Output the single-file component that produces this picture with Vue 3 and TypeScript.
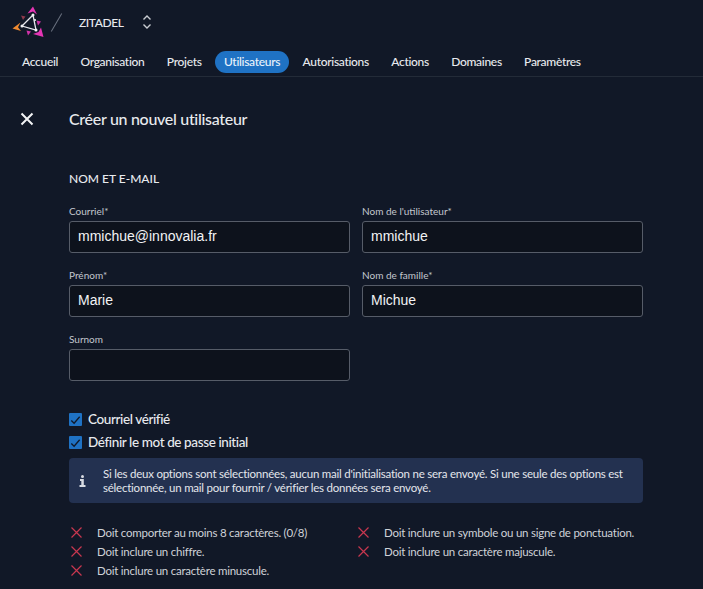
<template>
  <div class="page">
    <header class="topbar">
      <svg class="logo" width="34" height="36" viewBox="11 4 34 36" fill="none">
        <path d="M33 6.500 L37 14.500 L33 11.500 L27.500 13.500Z" fill="#e535b5" />
        <path d="M12.500 28.500 L20.500 22.500 L18 27.300 L21 31Z" fill="#f08a30" />
        <path d="M43.500 37 L33 34 L38.500 32 L41 27.500Z" fill="#e535b5" />
        <path d="M21 15.500 L25.500 16.500 L23 20Z" fill="#8f3a4c" />
        <path d="M36.500 20.500 L41 21.500 L38 25.500Z" fill="#d032a8" />
        <path d="M26.500 30.500 L31 31.500 L28 35.500Z" fill="#d032a8" />
        <path d="M33 15 L22 26 L36 30 Z" stroke="#e8e8ee" stroke-width="1.300" />
        <circle cx="33" cy="15" r="1.500" fill="#f2f2f5" />
        <circle cx="35" cy="20" r="1.100" fill="#f2f2f5" />
        <circle cx="22" cy="26" r="1.500" fill="#f2f2f5" />
        <circle cx="36" cy="30" r="1.500" fill="#f2f2f5" />
      </svg>
      <span class="slash"></span>
      <span class="org">ZITADEL</span>
      <svg class="updown" width="12" height="18" viewBox="0 0 12 18" fill="none" stroke="#c9ccd2" stroke-width="1.400">
        <path d="M2.500 6.500 L6 3 L9.500 6.500" />
        <path d="M2.500 11.500 L6 15 L9.500 11.500" />
      </svg>
    </header>

    <nav class="tabs">
      <a v-for="tab in tabs" :key="tab" class="tab" :class="{ active: tab === 'Utilisateurs' }">{{ tab }}</a>
    </nav>

    <main class="content">
      <div class="title-row">
        <svg class="close" width="14" height="14" viewBox="0 0 14 14" stroke="#f2f3f5" stroke-width="2" fill="none">
          <path d="M1.500 1.500 L12.500 12.500 M12.500 1.500 L1.500 12.500" />
        </svg>
        <h1>Créer un nouvel utilisateur</h1>
      </div>

      <section class="form">
        <h2>NOM ET E-MAIL</h2>
        <div class="fields">
          <label v-for="field in fields" :key="field.label" class="field">
            <span class="field-label">{{ field.label }}</span>
            <input type="text" :value="field.value" readonly />
          </label>
        </div>

        <div class="checks">
          <div v-for="check in checks" :key="check" class="check">
            <span class="box">
              <svg width="14" height="14" viewBox="0 0 14 14" fill="none" stroke="#10192a" stroke-width="1.400">
                <path d="M2.500 7.500 L5.500 10.500 L11.500 3.500" />
              </svg>
            </span>
            {{ check }}
          </div>
        </div>

        <div class="info">
          <svg class="info-icon" width="7" height="12" viewBox="0 0 7 12" fill="#d8dbe2">
            <circle cx="3.500" cy="1.600" r="1.500" />
            <path d="M1 4 H4.800 V10 H6.500 V12 H0.500 V10 H2.300 V6 H1Z" />
          </svg>
          <p>Si les deux options sont sélectionnées, aucun mail d'initialisation ne sera envoyé. Si une seule des options est sélectionnée, un mail pour fournir / vérifier les données sera envoyé.</p>
        </div>

        <ul class="rules">
          <li v-for="rule in rules" :key="rule" class="rule">
            <svg width="11" height="11" viewBox="0 0 11 11" stroke="#c8374f" stroke-width="1.200" fill="none">
              <path d="M0.500 0.500 L10.500 10.500 M10.500 0.500 L0.500 10.500" />
            </svg>
            <span>{{ rule }}</span>
          </li>
        </ul>
      </section>
    </main>
  </div>
</template>

<script setup lang="ts">
const tabs: string[] = [
  'Accueil',
  'Organisation',
  'Projets',
  'Utilisateurs',
  'Autorisations',
  'Actions',
  'Domaines',
  'Paramètres'
]

const fields: { label: string; value: string }[] = [
  { label: 'Courriel*', value: 'mmichue@innovalia.fr' },
  { label: "Nom de l'utilisateur*", value: 'mmichue' },
  { label: 'Prénom*', value: 'Marie' },
  { label: 'Nom de famille*', value: 'Michue' },
  { label: 'Surnom', value: '' }
]

const checks: string[] = ['Courriel vérifié', 'Définir le mot de passe initial']

const rules: string[] = [
  'Doit comporter au moins 8 caractères. (0/8)',
  'Doit inclure un symbole ou un signe de ponctuation.',
  'Doit inclure un chiffre.',
  'Doit inclure un caractère majuscule.',
  'Doit inclure un caractère minuscule.'
]
</script>

<style>
html,
body {
  margin: 0;
  background: #111827;
}
</style>

<style scoped>
.page {
  width: 703px;
  height: 589px;
  overflow: hidden;
  background: #111827;
  color: #e8eaee;
  font-family: Lato, "Liberation Sans", sans-serif;
}
.topbar {
  display: flex;
  align-items: center;
  height: 44px;
  padding-left: 11px;
}
.logo {
  flex: none;
}
.slash {
  width: 1px;
  height: 21px;
  margin-left: 11px;
  background: #6b7280;
  transform: rotate(30deg);
}
.org {
  margin-left: 22px;
  font-size: 12px;
  letter-spacing: -0.4px;
  font-weight: 500;
}
.updown {
  margin-left: 17px;
}
.tabs {
  display: flex;
  align-items: flex-start;
  gap: 4.300px;
  box-sizing: border-box;
  height: 33px;
  padding: 7px 0 0 13px;
  border-bottom: 1px solid #232b38;
}
.tab {
  padding: 3px 9px;
  border-radius: 11px;
  font-size: 12px;
  letter-spacing: -0.3px;
  line-height: 16px;
  font-weight: 500;
}
.tab.active {
  background: #1f72c4;
  color: #eaf2fb;
}
.content {
  padding: 32px 60px 0 20px;
}
.title-row {
  display: flex;
  align-items: center;
  gap: 35px;
}
.title-row h1 {
  margin: 0;
  font-size: 16px;
  letter-spacing: -0.3px;
  line-height: 20px;
  font-weight: 500;
}
.form {
  margin-left: 49px;
}
.form h2 {
  margin: 42px 0 0;
  font-size: 12px;
  line-height: 16px;
  font-weight: 500;
}
.fields {
  display: grid;
  grid-template-columns: 281px 281px;
  column-gap: 12px;
  row-gap: 15px;
  margin-top: 17px;
}
.field {
  display: flex;
  flex-direction: column;
  gap: 3px;
}
.field-label {
  font-size: 10px;
  line-height: 14px;
  color: #c3c7ce;
}
.field input {
  box-sizing: border-box;
  width: 100%;
  height: 32px;
  padding: 0 8px 2px;
  border: 1px solid #565c68;
  border-radius: 3px;
  background: #0d121c;
  color: #f2f3f5;
  font-family: "Liberation Sans", Arial, sans-serif;
  font-size: 14px;
  outline: none;
}
.checks {
  display: flex;
  flex-direction: column;
  gap: 10px;
  margin-top: 32px;
}
.check {
  display: flex;
  align-items: center;
  gap: 6px;
  font-size: 13.500px;
  letter-spacing: -0.39px;
  line-height: 13px;
  font-weight: 500;
}
.box {
  display: flex;
  align-items: center;
  justify-content: center;
  width: 13px;
  height: 13px;
  border-radius: 1px;
  background: #1f72c4;
}
.info {
  display: flex;
  align-items: center;
  box-sizing: border-box;
  width: 574px;
  height: 45px;
  margin-top: 9px;
  padding: 0 14px 0 10px;
  border-radius: 4px;
  background: #233150;
}
.info-icon {
  flex: none;
}
.info p {
  margin: 0 0 0 17px;
  font-size: 11.500px;
  letter-spacing: -0.230px;
  line-height: 14px;
  color: #e3e6ec;
}
.rules {
  display: grid;
  grid-template-columns: 287px 287px;
  grid-auto-rows: 19px;
  margin: 20px 0 0;
  padding: 0;
  list-style: none;
}
.rule {
  display: flex;
  align-items: center;
  gap: 15px;
  padding-left: 2px;
  font-size: 11.500px;
  letter-spacing: -0.240px;
  color: #cfd2d8;
}
.rule svg {
  flex: none;
}
</style>
